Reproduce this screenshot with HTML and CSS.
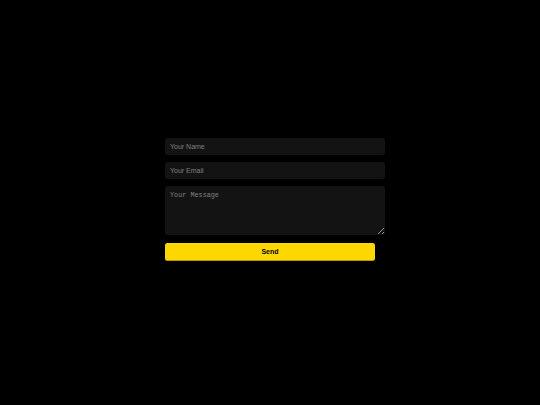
FILE: index.html
```html
<!DOCTYPE html>
<html>
<head>
<meta charset="utf-8">
<link rel="stylesheet" href="styles.css">
</head>
<body>
<div class="page">
  <form class="contact">
    <input class="field" type="text" placeholder="Your Name">
    <input class="field" type="email" placeholder="Your Email">
    <textarea class="field area" placeholder="Your Message"></textarea>
    <button class="send" type="button">Send</button>
  </form>
</div>
</body>
</html>
```
FILE: styles.css
```css
html, body {
  margin: 0;
  padding: 0;
  background: #000;
  height: 100%;
}
.page {
  padding-top: 138px;
  display: flex;
  justify-content: center;
}
.contact {
  width: 210px;
  display: flex;
  flex-direction: column;
}
.field {
  box-sizing: content-box;
  width: 100%;
  height: 7px;
  padding: 5px;
  margin: 0 0 7px 0;
  border: none;
  border-radius: 2.5px;
  background: #131313;
  color: #ccc;
  font-family: "Liberation Sans", Arial, sans-serif;
  font-size: 7px;
  line-height: 7px;
  outline: none;
}
.field::placeholder {
  color: #808080;
}
.area {
  height: 39px;
  margin-bottom: 8px;
  font-family: "Liberation Mono", "DejaVu Sans Mono", monospace;
  font-size: 6.8px;
  line-height: 8px;
  resize: vertical;
}
.send {
  box-sizing: border-box;
  width: 100%;
  height: 18px;
  border: none;
  border-bottom: 0.5px solid #b89b00;
  border-radius: 2.5px;
  background: #ffd700;
  color: #000;
  font-family: "Liberation Sans", Arial, sans-serif;
  font-weight: bold;
  font-size: 7px;
  padding: 0;
}
```
